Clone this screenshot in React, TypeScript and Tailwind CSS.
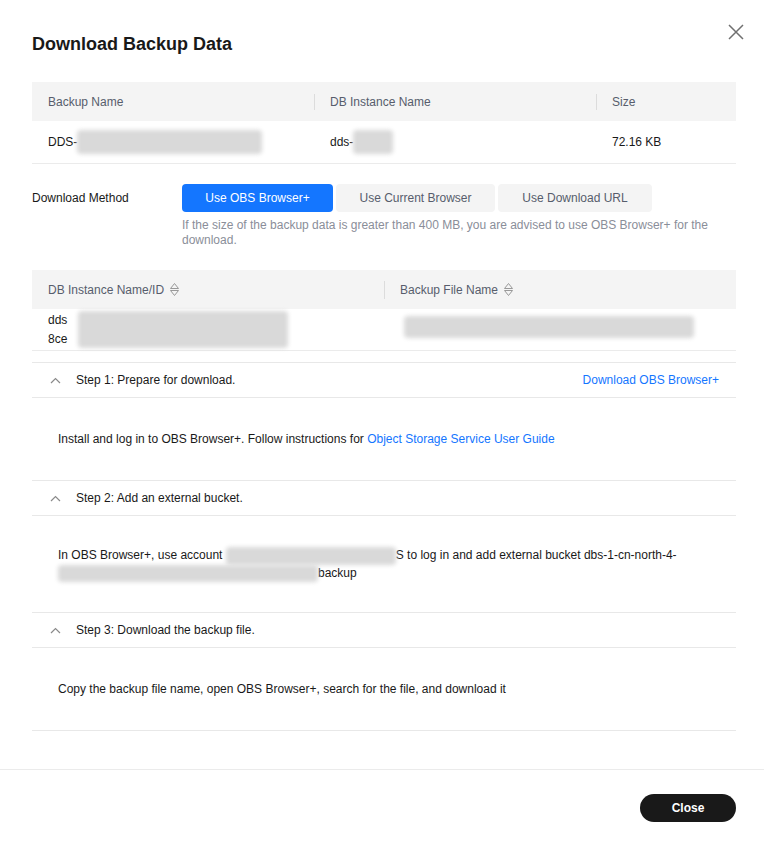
import React from "react";

const font = { fontFamily: '"Liberation Sans", Arial, sans-serif' };

function Blur({ className }: { className: string }) {
  return <span className={`inline-block rounded-sm bg-[#d9d9d9] blur-[2px] ${className}`} />;
}

function SortIcon() {
  return (
    <svg width="11" height="15" viewBox="0 0 11 15" className="ml-[5px]" fill="none" stroke="#999" strokeWidth="1">
      <path d="M1.5 6.5 L5.5 1.5 L9.5 6.5 Z" strokeLinejoin="round" />
      <path d="M1.5 8.5 L5.5 13.5 L9.5 8.5 Z" strokeLinejoin="round" />
    </svg>
  );
}

function Chevron() {
  return (
    <svg width="11" height="7" viewBox="0 0 11 7" fill="none" stroke="#8a8a8a" strokeWidth="1.2">
      <path d="M1 6 L5.5 1.5 L10 6" />
    </svg>
  );
}

function StepHeader({ title, link }: { title: string; link?: string }) {
  return (
    <div className="flex h-[35px] items-center border-t border-[#e8e8e8] pr-[17px] pl-[18px]">
      <Chevron />
      <span className="ml-[15px] text-[12px] text-[#191919]">{title}</span>
      {link && <a className="ml-auto text-[12px] text-[#1476ff]">{link}</a>}
    </div>
  );
}

export default function App() {
  return (
    <div style={font} className="relative flex h-[842px] w-full flex-col bg-white">
      <button className="absolute top-[24px] right-[20px] p-0">
        <svg width="16" height="16" viewBox="0 0 16 16" stroke="#707070" strokeWidth="1.5">
          <path d="M1 1 L15 15 M15 1 L1 15" />
        </svg>
      </button>

      <div className="flex-1 pt-8 pr-7 pl-8">
        <h2 className="text-[18px] leading-6 font-bold text-[#191919]">Download Backup Data</h2>

        {/* backup table */}
        <div className="mt-[26px] text-[12px]">
          <div className="grid h-[39px] grid-cols-[282px_282px_140px] items-center bg-[#f4f4f4] text-[#575d6c]">
            <div className="pl-4">Backup Name</div>
            <div className="border-l border-[#dcdcdc] pl-[15px] leading-4">DB Instance Name</div>
            <div className="border-l border-[#dcdcdc] pl-[15px] leading-4">Size</div>
          </div>
          <div className="grid h-[43px] grid-cols-[282px_282px_140px] items-center border-b border-[#ebebeb] text-[#191919]">
            <div className="flex items-center pl-4">
              DDS-
              <Blur className="h-[24px] w-[185px]" />
            </div>
            <div className="flex items-center pl-4">
              dds-
              <Blur className="h-[24px] w-[40px]" />
            </div>
            <div className="pl-4">72.16 KB</div>
          </div>
        </div>

        {/* download method */}
        <div className="mt-5 flex text-[12px]">
          <div className="flex h-7 w-[150px] items-center text-[#191919]">Download Method</div>
          <div className="flex-1">
            <div className="flex gap-[3px]">
              <button className="h-7 w-[151px] rounded bg-[#1476ff] text-white">Use OBS Browser+</button>
              <button className="h-7 w-[159px] rounded bg-[#f4f4f4] text-[#575d6c]">Use Current Browser</button>
              <button className="h-7 w-[154px] rounded bg-[#f4f4f4] text-[#575d6c]">Use Download URL</button>
            </div>
            <p className="mt-[6px] leading-[15px] text-[#8a8e99]">
              If the size of the backup data is greater than 400 MB, you are advised to use OBS Browser+ for the download.
            </p>
          </div>
        </div>

        {/* file table */}
        <div className="mt-[22px] text-[12px]">
          <div className="grid h-[39px] grid-cols-2 items-center bg-[#f4f4f4] text-[#575d6c]">
            <div className="flex items-center pl-4">
              DB Instance Name/ID
              <SortIcon />
            </div>
            <div className="flex items-center border-l border-[#dcdcdc] pl-[15px]">
              Backup File Name
              <SortIcon />
            </div>
          </div>
          <div className="grid h-[42px] grid-cols-2 items-center border-b border-[#ebebeb] text-[#191919]">
            <div className="flex items-center pl-4">
              <div className="flex w-[30px] flex-col leading-[19px]">
                <span>dds</span>
                <span>8ce</span>
              </div>
              <Blur className="h-[37px] w-[210px]" />
            </div>
            <div className="pl-5">
              <Blur className="h-[22px] w-[290px]" />
            </div>
          </div>
        </div>

        {/* steps */}
        <div className="mt-[11px] border-b border-[#e8e8e8]">
          <StepHeader title="Step 1: Prepare for download." link="Download OBS Browser+" />
          <div className="flex h-[83px] items-center border-t border-[#e8e8e8] pl-[26px] text-[12px] text-[#191919]">
            <span>
              Install and log in to OBS Browser+. Follow instructions for{" "}
              <a className="text-[#1476ff]">Object Storage Service User Guide</a>
            </span>
          </div>

          <StepHeader title="Step 2: Add an external bucket." />
          <div className="flex h-[97px] items-center border-t border-[#e8e8e8] pl-[26px] text-[12px] leading-[15px] text-[#191919]">
            <p>
              In OBS Browser+, use account <Blur className="h-[18px] w-[170px] align-middle" />S to log in and add external bucket dbs-1-cn-north-4-
              <br />
              <Blur className="h-[17px] w-[260px] align-middle" />
              backup
            </p>
          </div>

          <StepHeader title="Step 3: Download the backup file." />
          <div className="flex h-[83px] items-center border-t border-[#e8e8e8] pl-[26px] text-[12px] text-[#191919]">
            Copy the backup file name, open OBS Browser+, search for the file, and download it
          </div>
        </div>
      </div>

      <div className="flex h-[73px] justify-end border-t border-[#ebebeb] px-7 pt-[24px]">
        <button className="h-7 w-24 rounded-full bg-[#191919] text-[12px] font-bold text-white">Close</button>
      </div>
    </div>
  );
}
